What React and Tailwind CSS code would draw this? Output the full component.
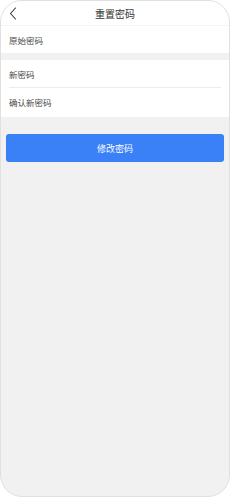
import React from "react";

export default function App() {
  const font = { fontFamily: '"Noto Sans CJK SC", "Noto Sans", sans-serif' };
  return (
    <div className="w-[230px] h-[497px] bg-white" style={font}>
      <div className="w-full h-full rounded-[22px] border border-[#e0e0e0] bg-[#f1f1f1] overflow-hidden flex flex-col">
        <div className="h-[24px] bg-white relative flex items-center justify-center">
          <svg className="absolute left-[8px] top-[6px]" width="8" height="13" viewBox="0 0 8 13" fill="none">
            <path d="M6.5 1 L1.5 6.5 L6.5 12" stroke="#333" strokeWidth="1.1" strokeLinecap="round" strokeLinejoin="round" />
          </svg>
          <span className="text-[10px] leading-none text-[#333] mt-[2px]">重置密码</span>
        </div>
        <div className="h-[28px] bg-white flex items-center px-[8px] border-t border-[#f3f3f3]">
          <span className="text-[8.5px] leading-none text-[#4a4a4a] mt-[1px]">原始密码</span>
        </div>
        <div className="h-[7px]" />
        <div className="bg-white">
          <div className="h-[27px] flex items-center px-[8px]">
            <span className="text-[8.5px] leading-none text-[#4a4a4a] mt-[1px]">新密码</span>
          </div>
          <div className="mx-[8px] h-px bg-[#ececec]" />
          <div className="h-[29px] flex items-center px-[8px]">
            <span className="text-[8.5px] leading-none text-[#4a4a4a]">确认新密码</span>
          </div>
        </div>
        <div className="px-[5px] pt-[17px]">
          <button className="w-full h-[28px] rounded-[3px] bg-[#3a80f7] text-white text-[9px] leading-none flex items-center justify-center">
            修改密码
          </button>
        </div>
      </div>
    </div>
  );
}
